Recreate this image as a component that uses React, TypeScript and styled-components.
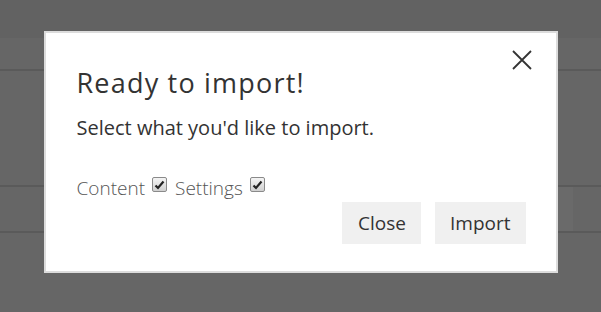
import styled, { createGlobalStyle } from "styled-components";

const GlobalStyle = createGlobalStyle`
  html, body {
    margin: 0;
    padding: 0;
    height: 100%;
    background: #666666;
    font-family: "Open Sans", "Noto Sans", sans-serif;
  }
  #root {
    height: 100%;
  }
`;

const Page = styled.div`
  height: 312px;
  background: #666666;
  overflow: hidden;
`;

const TopBar = styled.div`
  height: 38px;
  background: #626262;
`;

const SubHeader = styled.div`
  height: 31px;
  border-bottom: 2px solid #5a5a5a;
`;

const Spacer = styled.div`
  height: 114px;
`;

const Panel = styled.div`
  display: flex;
  justify-content: flex-end;
  height: 44px;
  border-top: 2px solid #5a5a5a;
  border-bottom: 2px solid #5a5a5a;
  padding-right: 28px;
`;

const PanelBox = styled.div`
  width: 130px;
  background: #6a6a6a;
`;

const Overlay = styled.div`
  position: fixed;
  inset: 0;
  display: flex;
  justify-content: center;
  align-items: flex-start;
  padding-top: 31px;
`;

const Modal = styled.div`
  position: relative;
  box-sizing: border-box;
  width: 514px;
  height: 242px;
  background: #ffffff;
  border: 2px solid #dcdcdc;
  padding: 33px 29px 0 31px;
  display: flex;
  flex-direction: column;
`;

const CloseIcon = styled.button`
  position: absolute;
  top: 15px;
  right: 22px;
  width: 24px;
  height: 24px;
  padding: 0;
  border: none;
  background: transparent;
  display: flex;
  align-items: center;
  justify-content: center;
  cursor: pointer;
`;

const Title = styled.h2`
  margin: 0;
  font-size: 27px;
  font-weight: 400;
  letter-spacing: 1.2px;
  line-height: 34px;
  color: #333333;
`;

const Lead = styled.p`
  margin: 15px 0 0;
  font-size: 20px;
  line-height: 26px;
  color: #333333;
`;

const Options = styled.div`
  display: flex;
  align-items: flex-end;
  gap: 8px;
  margin-top: 34px;
`;

const OptionLabel = styled.label`
  display: inline-flex;
  align-items: flex-end;
  gap: 7px;
  font-size: 19px;
  font-weight: 300;
  line-height: 26px;
  color: #555555;
`;

const Check = styled.span`
  display: inline-flex;
  align-items: center;
  justify-content: center;
  box-sizing: border-box;
  width: 15px;
  height: 15px;
  margin-bottom: 9px;
  border: 1px solid #8a8a8a;
  border-radius: 2px;
  background: linear-gradient(#f4f4f4, #d0d0d0);
`;

const Actions = styled.div`
  display: flex;
  justify-content: flex-end;
  gap: 14px;
  margin-top: 1px;
  padding-right: 1px;
`;

const Button = styled.button<{ $pad: string }>`
  height: 42px;
  padding: ${(p) => p.$pad};
  border: none;
  background: #f0f0f0;
  font-family: inherit;
  font-size: 19px;
  color: #333333;
  cursor: pointer;
`;

const CheckMark = () => (
  <svg width="11" height="10" viewBox="0 0 11 10">
    <path d="M1.5 5.5 L4 8 L9.5 1.5" fill="none" stroke="#222" strokeWidth="2.2" />
  </svg>
);

const Option = ({ label }: { label: string }) => (
  <OptionLabel>
    {label}
    <Check role="checkbox" aria-checked="true">
      <CheckMark />
    </Check>
  </OptionLabel>
);

export default function App() {
  return (
    <>
      <GlobalStyle />
      <Page>
        <TopBar />
        <SubHeader />
        <Spacer />
        <Panel>
          <PanelBox />
        </Panel>
      </Page>
      <Overlay>
        <Modal>
          <CloseIcon aria-label="Close">
            <svg width="20" height="20" viewBox="0 0 20 20">
              <path d="M1 1 L19 19 M19 1 L1 19" stroke="#333" strokeWidth="1.8" />
            </svg>
          </CloseIcon>
          <Title>Ready to import!</Title>
          <Lead>Select what you'd like to import.</Lead>
          <Options>
            <Option label="Content" />
            <Option label="Settings" />
          </Options>
          <Actions>
            <Button $pad="0 15px 0 16px">Close</Button>
            <Button $pad="0 15px">Import</Button>
          </Actions>
        </Modal>
      </Overlay>
    </>
  );
}
